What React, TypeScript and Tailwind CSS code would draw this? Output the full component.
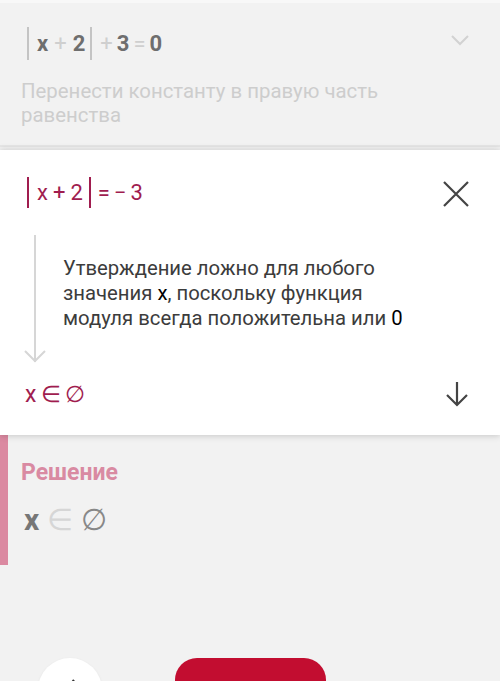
import React from "react"

const font = { fontFamily: "Roboto, 'Noto Sans', sans-serif" }

function Bar({ className }: { className: string }) {
    return <span className={"inline-block w-[2px] " + className} />
}

export default function App() {
    return (
        <div className="w-[500px] h-[681px] bg-[#f2f2f2] overflow-hidden flex flex-col" style={font}>
            {/* previous step, collapsed */}
            <div className="shrink-0 pt-[24px] pl-[27px] pr-[30px] border-b-2 border-[#e6e6e6] h-[147px] border-t-[3px] border-t-[#f8f8f8]">
                <div className="flex items-start justify-between">
                    <div className="flex items-center h-[33px] text-[22px] font-bold text-[#6e6e6e] leading-none">
                        <Bar className="h-[33px] bg-[#c4c4c4]" />
                        <span className="ml-[8px]">x</span>
                        <span className="mx-[6px] font-normal text-[#cfcfcf]">+</span>
                        <span>2</span>
                        <Bar className="h-[33px] bg-[#c4c4c4] ml-[5px]" />
                        <span className="ml-[8px] font-normal text-[#cfcfcf]">+</span>
                        <span className="ml-[4px]">3</span>
                        <span className="mx-[4px] font-normal text-[#cfcfcf]">=</span>
                        <span>0</span>
                    </div>
                    <svg width="20" height="12" viewBox="0 0 20 12" className="mt-[7px]">
                        <path d="M2 2 L10 10 L18 2" fill="none" stroke="#d2d2d2" strokeWidth="2" />
                    </svg>
                </div>
                <p className="-ml-[6px] mt-[19px] text-[20.4px] leading-[24px] text-[#cdcdcd] w-[400px]">
                    Перенести константу в правую часть равенства
                </p>
            </div>

            {/* current step */}
            <div className="shrink-0 mt-[3px] bg-white h-[285px] shadow-[0_-2px_6px_rgba(0,0,0,0.08),0_2px_6px_rgba(0,0,0,0.12)] relative z-10 pl-[27px] pr-[30px] pt-[27px]">
                <div className="flex items-start justify-between">
                    <div className="flex items-center h-[31px] text-[22px] text-[#a01d4f] leading-none">
                        <Bar className="h-[31px] bg-[#a01d4f]" />
                        <span className="ml-[8px]">x</span>
                        <span className="mx-[5px]">+</span>
                        <span>2</span>
                        <Bar className="h-[31px] bg-[#a01d4f] ml-[6px]" />
                        <span className="ml-[7px]">=</span>
                        <span className="ml-[4px]">−</span>
                        <span className="ml-[4px]">3</span>
                    </div>
                    <svg width="28" height="28" viewBox="0 0 28 28" className="mt-[3px]">
                        <path d="M2 2 L26 26 M26 2 L2 26" fill="none" stroke="#444" strokeWidth="2.2" />
                    </svg>
                </div>
                <div className="flex mt-[27px]">
                    <div className="shrink-0 w-[24px] -ml-[4px] flex flex-col items-center">
                        <div className="w-[2px] h-[127px] bg-[#d6d6d6]" />
                        <svg width="24" height="14" viewBox="0 0 24 14" className="-mt-[13px]">
                            <path d="M2 2 L12 12 L22 2" fill="none" stroke="#d6d6d6" strokeWidth="2" />
                        </svg>
                    </div>
                    <p className="ml-[16px] mt-[21px] text-[20.3px] leading-[25px] text-[#3c3c3c] w-[380px]">
                        Утверждение ложно для любого<br />значения <span className="text-black">x</span>, поскольку функция<br />модуля всегда положительна или <span className="text-black">0</span>
                    </p>
                </div>
                <div className="flex items-center justify-between mt-[17px]">
                    <div className="flex items-center text-[23px] text-[#a01d4f] leading-none -ml-[2px]">
                        <span>x</span>
                        <span className="ml-[5px]">∈</span>
                        <span className="ml-[4px]">∅</span>
                    </div>
                    <svg width="26" height="28" viewBox="0 0 26 28">
                        <path d="M13 2 L13 25 M3 15 L13 25 L23 15" fill="none" stroke="#444" strokeWidth="2.2" />
                    </svg>
                </div>
            </div>

            {/* solution */}
            <div className="shrink-0 flex h-[130px]">
                <div className="w-[8px] bg-[#db89a1]" />
                <div className="pl-[13px] pt-[26px]">
                    <div className="text-[23px] font-bold text-[#d98aa2] leading-none">Решение</div>
                    <div className="mt-[21px] ml-[3px] flex items-center text-[30px] leading-none">
                        <span className="font-bold text-[#777]">x</span>
                        <span className="ml-[8px] text-[#d6d6d6]">∈</span>
                        <span className="ml-[8px] text-[#888]">∅</span>
                    </div>
                </div>
            </div>

            {/* bottom actions */}
            <div className="shrink-0 flex items-start mt-[93px]">
                <button className="ml-[38px] w-[64px] h-[64px] rounded-full bg-white shadow-[0_1px_3px_rgba(0,0,0,0.08)] flex justify-center pt-[20px]">
                    <svg width="14" height="24" viewBox="0 0 14 24">
                        <path d="M11 2 L3 12 L11 22" fill="none" stroke="#333" strokeWidth="2.2" />
                    </svg>
                </button>
                <button className="ml-[73px] w-[151px] h-[64px] rounded-[22px] bg-[#c20d30]" />
            </div>
        </div>
    )
}
